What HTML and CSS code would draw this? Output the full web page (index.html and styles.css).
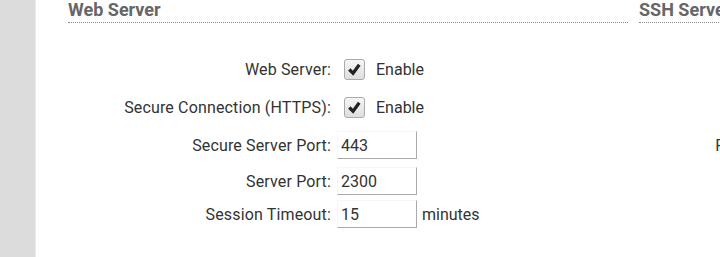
FILE: index.html
```html
<!DOCTYPE html>
<html lang="en">
<head>
    <meta charset="utf-8">
    <title>Services</title>
    <link rel="stylesheet" href="styles.css">
</head>
<body>
<div id="sidebar"></div>
<div id="content">
    <div class="section">
        <h2>Web Server</h2>
        <div class="form">
            <label class="lbl">Web Server:</label>
            <div class="field"><span class="check"><svg viewBox="0 0 20 20" width="20" height="20"><path d="M4.5 10 L8.5 14 L15 5" fill="none" stroke="#222" stroke-width="3.4"/></svg></span><span class="after">Enable</span></div>

            <label class="lbl">Secure Connection (HTTPS):</label>
            <div class="field"><span class="check"><svg viewBox="0 0 20 20" width="20" height="20"><path d="M4.5 10 L8.5 14 L15 5" fill="none" stroke="#222" stroke-width="3.4"/></svg></span><span class="after">Enable</span></div>

            <label class="lbl">Secure Server Port:</label>
            <div class="field"><input class="txt" type="text" value="443"></div>

            <label class="lbl">Server Port:</label>
            <div class="field"><input class="txt" type="text" value="2300"></div>

            <label class="lbl">Session Timeout:</label>
            <div class="field"><input class="txt" type="text" value="15"><span class="unit">minutes</span></div>
        </div>
    </div>
    <div class="section">
        <h2>SSH Server</h2>
        <div class="form ssh">
            <label class="lbl"></label><div class="field"></div>
            <label class="lbl"></label><div class="field"></div>
            <label class="lbl">Port:</label><div class="field"><input class="txt" type="text" value="22"></div>
        </div>
    </div>
</div>
</body>
</html>
```
FILE: styles.css
```css
html, body {
    margin: 0;
    height: 100%;
    overflow: hidden;
    background: #fff;
}

body {
    display: flex;
    font-family: Roboto, "Liberation Sans", sans-serif;
    font-size: 16px;
    color: #333;
}

#sidebar {
    width: 35px;
    flex: none;
    background: #dcdcdc;
    border-right: 1px solid #ebebeb;
}

#content {
    display: flex;
    gap: 11px;
    padding-left: 32px;
}

.section {
    width: 560px;
    flex: none;
}

h2 {
    margin: 1px 0 0;
    font-size: 18px;
    line-height: 18px;
    font-weight: bold;
    color: #666;
    padding-bottom: 3px;
    border-bottom: 1px dotted #888;
}

.form {
    display: grid;
    grid-template-columns: 263px 1fr;
    grid-template-rows: 38px 38px 38px 34px 32px;
    margin-top: 27px;
    align-items: center;
}

.form.ssh {
    grid-template-columns: 111px 1fr;
}

.lbl {
    text-align: right;
    white-space: nowrap;
    letter-spacing: 0.15px;
}

.field {
    display: flex;
    align-items: center;
    padding-left: 6px;
}

.check {
    width: 19px;
    height: 19px;
    margin-left: 7px;
    border: 1px solid #aaa;
    border-radius: 3px;
    background: linear-gradient(#f6f6f6, #dedede);
    display: flex;
}

.check svg {
    width: 19px;
    height: 19px;
}

.after {
    margin-left: 11px;
}

.txt {
    box-sizing: border-box;
    width: 80px;
    height: 28px;
    padding: 0 3px;
    font: inherit;
    color: #333;
    border: 1px solid #f7f7f7;
    border-right-color: #aaa;
    border-bottom-color: #aaa;
    outline: none;
}

.unit {
    margin-left: 5px;
}
```
